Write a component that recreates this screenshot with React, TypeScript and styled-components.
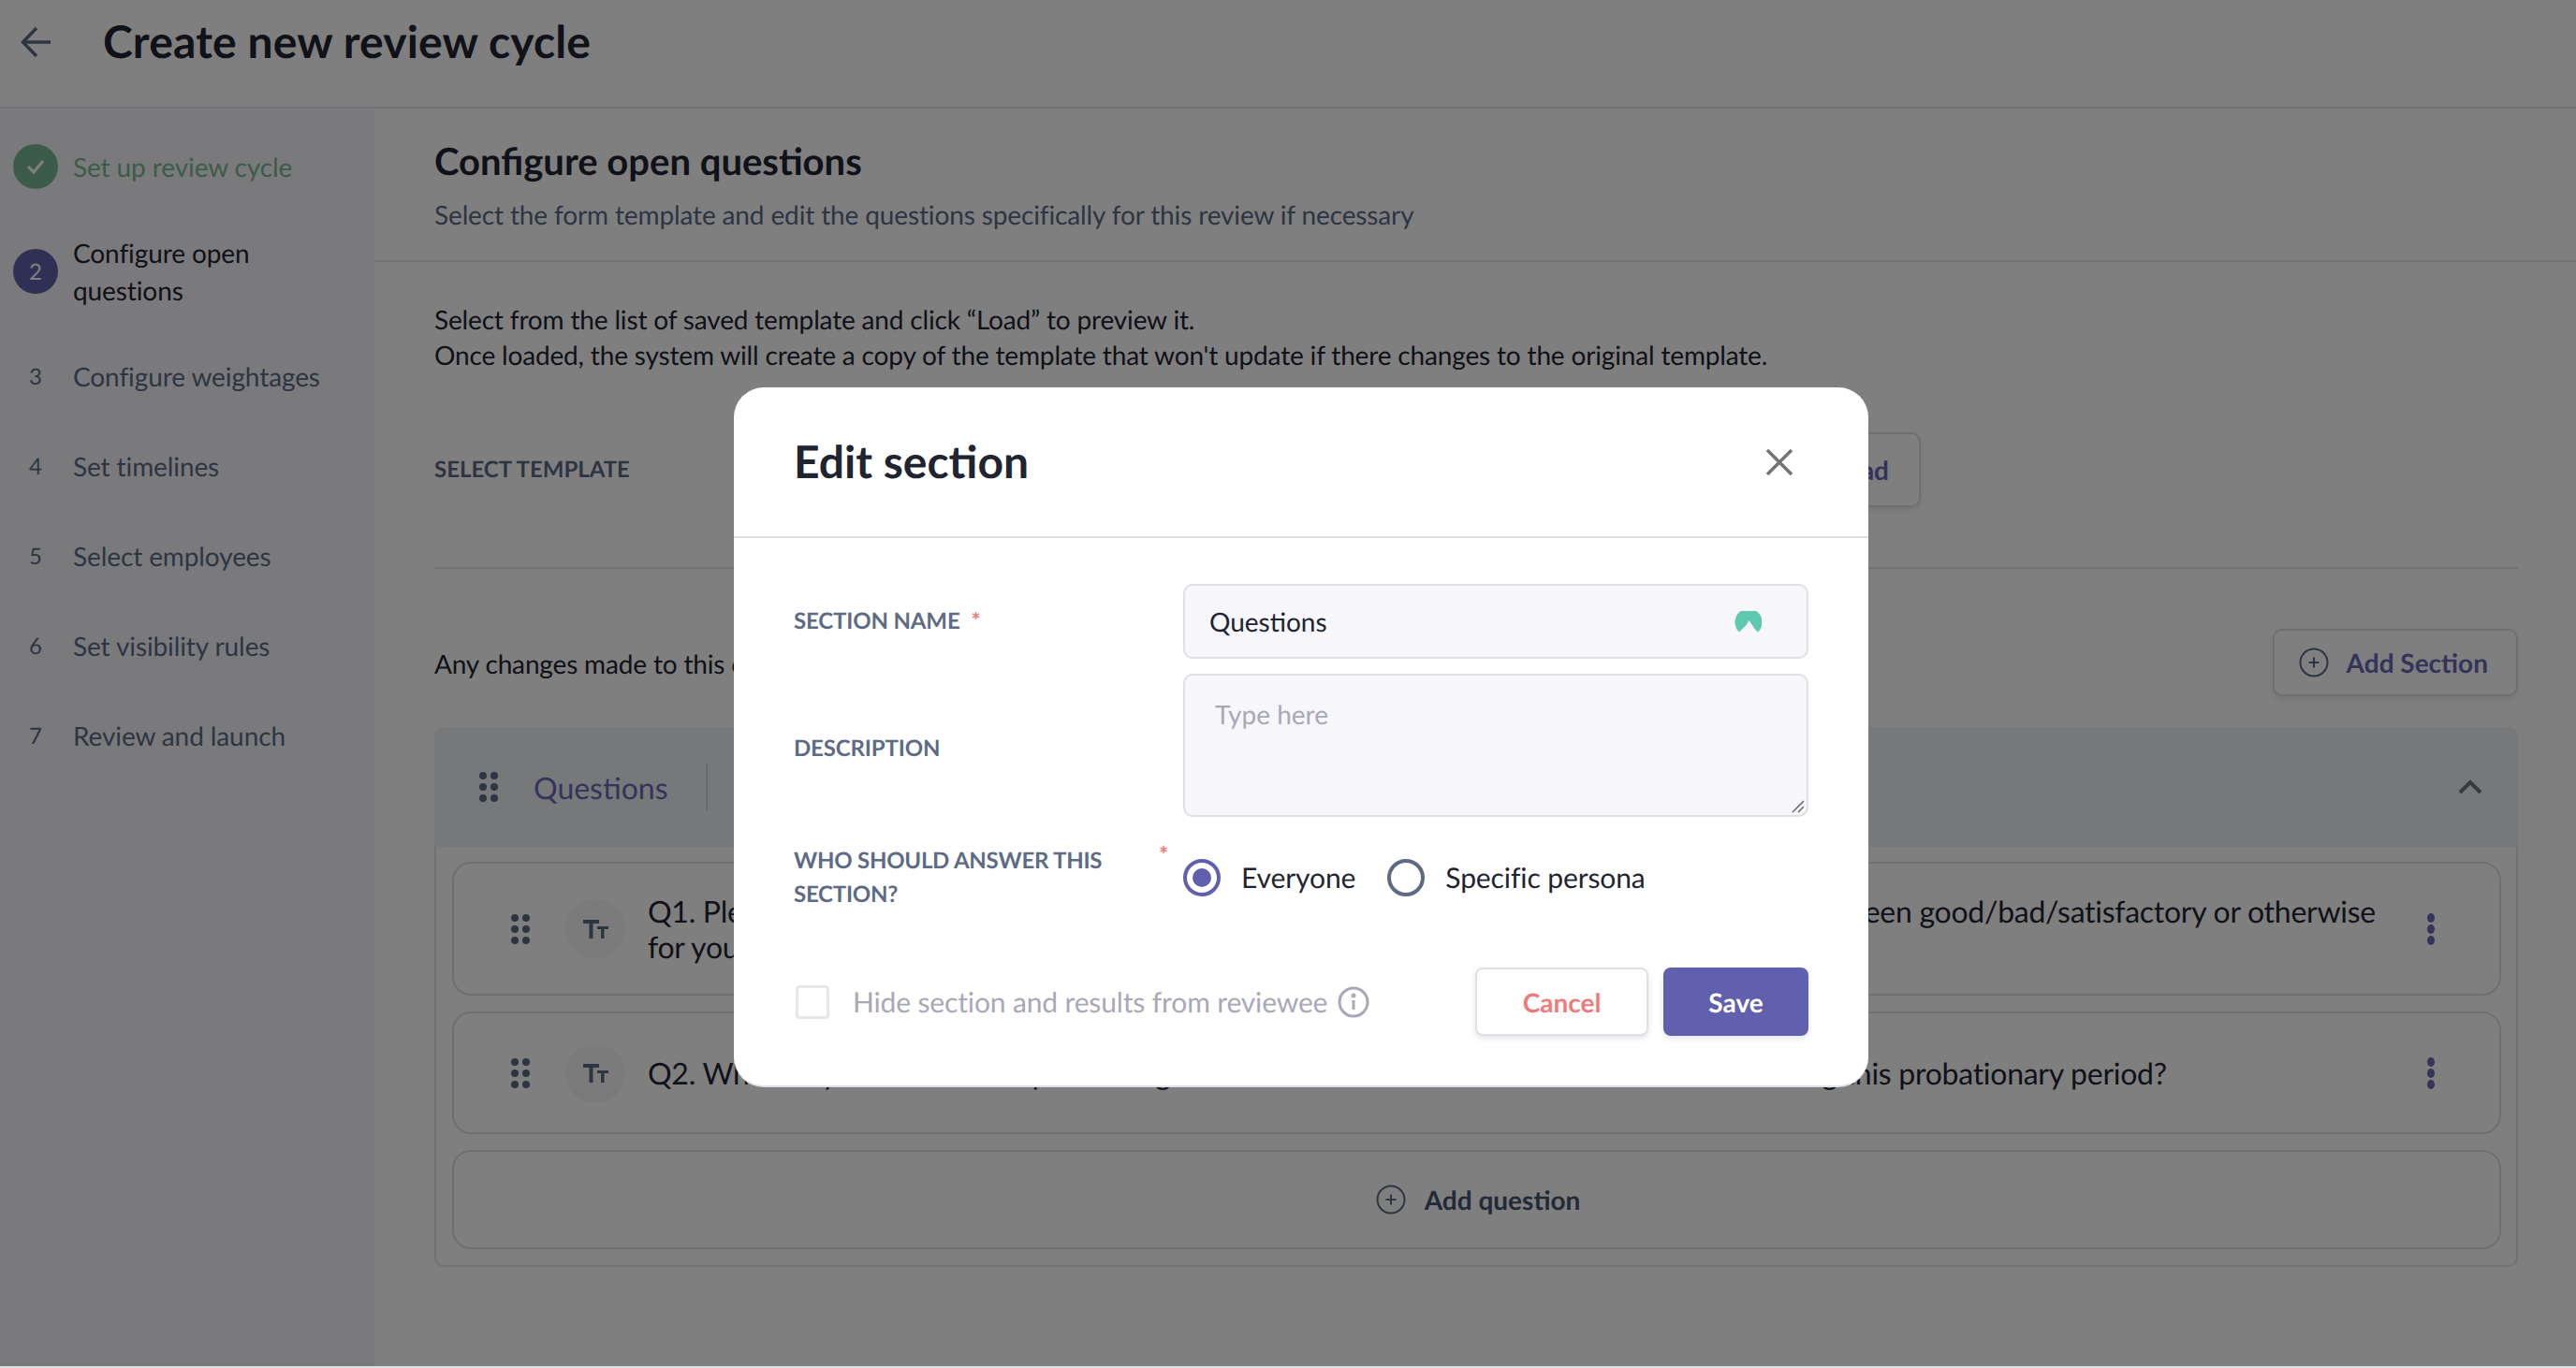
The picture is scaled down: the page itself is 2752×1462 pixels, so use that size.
import React from 'react';
import styled, { createGlobalStyle } from 'styled-components';

const Global = createGlobalStyle`
  html, body {
    margin: 0;
    padding: 0;
    background: #fff;
  }
  * {
    box-sizing: border-box;
  }
  #root {
    font-family: Lato, 'Liberation Sans', sans-serif;
    text-rendering: geometricPrecision;
  }
`;

const Page = styled.div`
  width: 2752px;
  height: 1462px;
  overflow: hidden;
  position: relative;
  display: flex;
  flex-direction: column;
  color: #1f2530;
  border-bottom: 2px solid #dcdfe6;
`;

const Header = styled.header`
  height: 116px;
  flex: none;
  display: flex;
  align-items: center;
  padding: 0 0 24px 22px;
  gap: 54px;
  border-bottom: 2px solid #e3e4ec;
`;

const Title = styled.h1`
  margin: 0;
  font-size: 48px;
  font-weight: 700;
  line-height: 60px;
  letter-spacing: 0.15px;
`;

const Body = styled.div`
  flex: 1;
  display: flex;
  min-height: 0;
`;

const Sidebar = styled.nav`
  width: 400px;
  flex: none;
  background: #f5f5f8;
  display: flex;
  flex-direction: column;
  padding: 38px 0 0 14px;
`;

const Step = styled.div`
  display: flex;
  align-items: center;
  gap: 16px;
  margin-bottom: 48px;
  min-height: 48px;
`;

const StepBadge = styled.span<{ $bg?: string }>`
  width: 48px;
  height: 48px;
  flex: none;
  border-radius: 50%;
  display: flex;
  align-items: center;
  justify-content: center;
  font-size: 24px;
  color: ${({ $bg }) => ($bg ? '#fff' : '#5d6b85')};
  background: ${({ $bg }) => $bg ?? 'transparent'};
`;

const StepText = styled.span<{ $color: string }>`
  font-size: 28px;
  line-height: 40px;
  letter-spacing: -0.1px;
  color: ${({ $color }) => $color};
`;

const Main = styled.main`
  flex: 1;
  min-width: 0;
  display: flex;
  flex-direction: column;
`;

const SectionHead = styled.div`
  height: 164px;
  padding: 32px 64px 0;
  border-bottom: 2px solid #e3e4ec;
`;

const SectionTitle = styled.h2`
  margin: 0;
  font-size: 40px;
  font-weight: 700;
  line-height: 48px;
`;

const SectionSub = styled.p`
  margin: 15px 0 0;
  font-size: 28px;
  line-height: 36px;
  letter-spacing: -0.13px;
  color: #5d6b85;
`;

const Content = styled.div`
  padding: 42px 62px 0 64px;
  display: flex;
  flex-direction: column;
`;

const Intro = styled.p`
  margin: 0;
  font-size: 28px;
  line-height: 38px;
  letter-spacing: -0.16px;
`;

const TemplateRow = styled.div`
  display: flex;
  align-items: flex-start;
  justify-content: space-between;
  height: 146px;
  margin-top: 64px;
  border-bottom: 2px solid #e3e4ec;
`;

const FieldLabel = styled.span`
  font-size: 24px;
  font-weight: 700;
  line-height: 36px;
  color: #5d6b85;
`;

const TemplateLabel = styled(FieldLabel)`
  margin-top: 22px;
`;

const OutlineButton = styled.button`
  font-family: inherit;
  font-size: 28px;
  font-weight: 700;
  color: #6a66b4;
  background: #fff;
  border: 2px solid #dcdfe6;
  border-radius: 10px;
  box-shadow: 0 3px 6px rgba(40, 40, 70, 0.1);
  display: flex;
  align-items: center;
  justify-content: flex-end;
  white-space: nowrap;
  text-rendering: inherit;
`;

const LoadButton = styled(OutlineButton)`
  width: 300px;
  height: 80px;
  padding: 0 32px;
  margin-right: 638px;
`;

const ChangesRow = styled.div`
  display: flex;
  align-items: center;
  justify-content: space-between;
  height: 72px;
  margin-top: 64px;
  font-size: 28px;
  letter-spacing: -0.16px;
`;

const ChangesText = styled.span`
  padding-top: 2px;
`;

const AddSection = styled(OutlineButton)`
  width: 262px;
  height: 72px;
  padding: 0 30px 0 26px;
  justify-content: space-between;
`;

const Accordion = styled.section`
  margin-top: 33px;
  height: 577px;
  border: 2px solid #e3e4ec;
  border-top: none;
  border-radius: 10px;
`;

const AccordionHead = styled.div`
  height: 128px;
  margin: 0 -2px;
  padding: 0 38px 0 48px;
  background: #eff0f3;
  border-radius: 10px 10px 0 0;
  display: flex;
  align-items: center;
`;

const AccordionName = styled.span`
  margin-left: 38px;
  font-size: 32px;
  color: #6a66b4;
  padding: 2px 40px 0 0;
  border-right: 2px solid #d5d8df;
  line-height: 48px;
`;

const Chevron = styled.svg`
  margin-left: auto;
`;

const Cards = styled.div`
  padding: 16px 16px 0 17px;
  display: flex;
  flex-direction: column;
  gap: 17px;
`;

const Card = styled.div<{ $h: number }>`
  height: ${({ $h }) => $h}px;
  border: 2px solid #dcdfe6;
  border-radius: 20px;
  display: flex;
  align-items: center;
  padding: 0 68px 0 61px;
`;

const TypeBadge = styled.span`
  width: 64px;
  height: 64px;
  flex: none;
  border-radius: 50%;
  margin: 0 24px 0 38px;
  background: #f6f6f7;
  display: flex;
  align-items: center;
  justify-content: center;
`;

const QuestionText = styled.p`
  flex: 1;
  margin: 0;
  font-size: 32px;
  line-height: 38px;
  letter-spacing: -0.27px;
`;

const AddCard = styled(Card)`
  justify-content: center;
  gap: 20px;
  font-size: 28px;
  font-weight: 700;
  color: #46556f;
  padding: 0 0 0 3px;
`;

const Overlay = styled.div`
  position: absolute;
  inset: 0;
  background: rgba(0, 0, 0, 0.5);
`;

const Modal = styled.div`
  position: absolute;
  left: 784px;
  top: 414px;
  width: 1212px;
  height: 748px;
  background: #fff;
  border-radius: 32px;
  border-bottom: 2px solid #dde0e6;
  display: flex;
  flex-direction: column;
`;

const ModalHead = styled.div`
  height: 161px;
  flex: none;
  border-bottom: 2px solid #dde0e6;
  padding: 0 80px 0 64px;
  display: flex;
  align-items: center;
  justify-content: space-between;
`;

const ModalTitle = styled.h3`
  margin: 0;
  font-size: 48px;
  font-weight: 700;
  line-height: 60px;
  color: #1f2530;
`;

const ModalBody = styled.div`
  padding: 49px 64px 0;
  display: grid;
  grid-template-columns: 416px 668px;
  row-gap: 16px;
`;

const FormLabel = styled(FieldLabel)`
  align-self: center;
  letter-spacing: -0.15px;
`;

const DescriptionLabel = styled(FormLabel)`
  padding-top: 6px;
`;

const Required = styled.span`
  color: #ee7a7a;
  margin-left: 12px;
`;

const InputBox = styled.div`
  height: 80px;
  border: 2px solid #dde0e6;
  border-radius: 10px;
  background: #f6f6fb;
  padding: 0 48px 0 26px;
  display: flex;
  align-items: center;
  justify-content: space-between;
  font-size: 28px;
  color: #1f2530;
`;

const TextareaBox = styled.div`
  height: 153px;
  position: relative;
  border: 2px solid #dde0e6;
  border-radius: 10px;
  background: #f6f6fb;
  padding: 21px 32px;
  font-size: 28px;
  line-height: 40px;
  color: #a8a8b8;
`;

const ResizeGrip = styled.svg`
  position: absolute;
  right: 2px;
  bottom: 2px;
`;

const AnswerLabel = styled(FieldLabel)`
  position: relative;
  margin-top: 13px;
  letter-spacing: -0.24px;
`;

const AnswerRequired = styled.span`
  position: absolute;
  left: 390px;
  top: -6px;
  color: #ee7a7a;
`;

const RadioRow = styled.div`
  display: flex;
  align-items: center;
  margin-top: 29px;
  height: 40px;
  font-size: 30px;
  letter-spacing: -0.1px;
`;

const Radio = styled.span<{ $checked?: boolean }>`
  width: 40px;
  height: 40px;
  border-radius: 50%;
  flex: none;
  margin-right: 22px;
  border: 4px solid ${({ $checked }) => ($checked ? '#6160ae' : '#5d6b85')};
  display: flex;
  align-items: center;
  justify-content: center;
  &::after {
    content: '';
    width: 20px;
    height: 20px;
    border-radius: 50%;
    background: ${({ $checked }) => ($checked ? '#6160ae' : 'transparent')};
  }
`;

const RadioName = styled.span`
  margin-right: 34px;
`;

const ModalFoot = styled.div`
  display: flex;
  align-items: center;
  padding: 0 64px 0 66px;
  margin-top: 60px;
`;

const Checkbox = styled.span`
  width: 36px;
  height: 36px;
  flex: none;
  border: 3px solid #e6e7ea;
  border-radius: 4px;
  margin-right: 25px;
`;

const HideText = styled.span`
  font-size: 30px;
  letter-spacing: -0.14px;
  color: #a8a8b8;
  margin-right: 11px;
`;

const CancelButton = styled.button`
  margin-left: auto;
  width: 185px;
  height: 73px;
  border: 2px solid #dfe0e8;
  border-radius: 8px;
  background: #fff;
  box-shadow: 0 3px 6px rgba(40, 40, 70, 0.12);
  color: #ee7a7a;
  font-family: inherit;
  font-size: 28px;
  font-weight: 700;
  text-rendering: inherit;
`;

const SaveButton = styled.button`
  margin-left: 16px;
  width: 155px;
  height: 73px;
  border: none;
  border-radius: 8px;
  background: #6160ae;
  box-shadow: 0 3px 6px rgba(40, 40, 70, 0.12);
  color: #fff;
  font-family: inherit;
  font-size: 28px;
  font-weight: 700;
  text-rendering: inherit;
`;

function Dots(): JSX.Element {
  return (
    <svg width="20" height="32" viewBox="0 0 20 32" fill="#5d6b85">
      {[4, 16, 28].flatMap((y) =>
        [4, 16].map((x) => <circle key={`${x}-${y}`} cx={x} cy={y} r="4" />)
      )}
    </svg>
  );
}

function TtIcon(): JSX.Element {
  return (
    <svg width="28" height="20" viewBox="0 0 28 20" fill="#5d6b85">
      <path d="M1 0h17v4h-6.500v16H7.500V4H1z" />
      <path d="M16 7h12v3h-4.500v10h-3.500V10H16z" />
    </svg>
  );
}

function Kebab(): JSX.Element {
  return (
    <svg width="10" height="34" viewBox="0 0 10 34" fill="#6a66b4">
      {[5, 17, 29].map((y) => (
        <ellipse key={y} cx="5" cy={y} rx="4" ry="5" />
      ))}
    </svg>
  );
}

function PlusCircle({ size, color }: { size: number; color: string }): JSX.Element {
  return (
    <svg width={size} height={size} viewBox="0 0 32 32" fill="none" stroke={color} strokeWidth="2">
      <circle cx="16" cy="16" r="14.500" />
      <path d="M16 10.500v11M10.500 16h11" />
    </svg>
  );
}

export default function App(): JSX.Element {
  return (
    <Page>
      <Global />
      <Header>
        <svg width="34" height="34" viewBox="0 0 34 34" fill="none" stroke="#5d6b85" strokeWidth="3.500">
          <path d="M32 17H3M17 2 2.500 17 17 32" />
        </svg>
        <Title>Create new review cycle</Title>
      </Header>
      <Body>
        <Sidebar>
          <Step>
            <StepBadge $bg="#7ab794">
              <svg width="22" height="18" viewBox="0 0 22 18" fill="none" stroke="#fff" strokeWidth="3">
                <path d="M3 9l6 6L19 3" />
              </svg>
            </StepBadge>
            <StepText $color="#7ab794">Set up review cycle</StepText>
          </Step>
          <Step>
            <StepBadge $bg="#6160ae">2</StepBadge>
            <StepText $color="#1f2530">
              Configure open
              <br />
              questions
            </StepText>
          </Step>
          {[
            ['3', 'Configure weightages'],
            ['4', 'Set timelines'],
            ['5', 'Select employees'],
            ['6', 'Set visibility rules'],
            ['7', 'Review and launch'],
          ].map(([n, label]) => (
            <Step key={n}>
              <StepBadge>{n}</StepBadge>
              <StepText $color="#5d6b85">{label}</StepText>
            </Step>
          ))}
        </Sidebar>
        <Main>
          <SectionHead>
            <SectionTitle>Configure open questions</SectionTitle>
            <SectionSub>
              Select the form template and edit the questions specifically for this review if necessary
            </SectionSub>
          </SectionHead>
          <Content>
            <Intro>
              Select from the list of saved template and click “Load” to preview it.
              <br />
              Once loaded, the system will create a copy of the template that won't update if there changes
              to the original template.
            </Intro>
            <TemplateRow>
              <TemplateLabel>SELECT TEMPLATE</TemplateLabel>
              <LoadButton>Load</LoadButton>
            </TemplateRow>
            <ChangesRow>
              <ChangesText>Any changes made to this copy will not affect the original template.</ChangesText>
              <AddSection>
                <PlusCircle size={32} color="#5d6b85" />
                Add Section
              </AddSection>
            </ChangesRow>
            <Accordion>
              <AccordionHead>
                <Dots />
                <AccordionName>Questions</AccordionName>
                <Chevron width="26" height="16" viewBox="0 0 26 16" fill="none" stroke="#6f7378" strokeWidth="4">
                  <path d="M2 14 13 3l11 11" />
                </Chevron>
              </AccordionHead>
              <Cards>
                <Card $h={143}>
                  <Dots />
                  <TypeBadge>
                    <TtIcon />
                  </TypeBadge>
                  <QuestionText>
                    Q1. Please share your thoughts on the overall performance of your employees and why it has been
                    good/bad/satisfactory or otherwise
                    <br />
                    for your team.
                  </QuestionText>
                  <Kebab />
                </Card>
                <Card $h={131}>
                  <Dots />
                  <TypeBadge>
                    <TtIcon />
                  </TypeBadge>
                  <QuestionText>
                    Q2. What do you think about pace and growth shown at work and the results thus far during this
                    probationary period?
                  </QuestionText>
                  <Kebab />
                </Card>
                <AddCard $h={106}>
                  <PlusCircle size={32} color="#5d6b85" />
                  Add question
                </AddCard>
              </Cards>
            </Accordion>
          </Content>
        </Main>
      </Body>
      <Overlay />
      <Modal>
        <ModalHead>
          <ModalTitle>Edit section</ModalTitle>
          <svg width="30" height="30" viewBox="0 0 30 30" fill="none" stroke="#737373" strokeWidth="3.500">
            <path d="M2 2l26 26M28 2 2 28" />
          </svg>
        </ModalHead>
        <ModalBody>
          <FormLabel>
            SECTION NAME<Required>*</Required>
          </FormLabel>
          <InputBox>
            Questions
            <svg width="29" height="23" viewBox="0 0 29 23">
              <path
                d="M5 22.500A14.500 14.500 0 1 1 25 22.500L21.500 19 19 15 15.500 10 12.500 15 9.500 18z"
                fill="#5dc9b0"
              />
            </svg>
          </InputBox>
          <DescriptionLabel>DESCRIPTION</DescriptionLabel>
          <TextareaBox>
            Type here
            <ResizeGrip width="14" height="14" viewBox="0 0 14 14" stroke="#666" strokeWidth="1.500">
              <path d="M1 13 13 1M7 13l6-6" />
            </ResizeGrip>
          </TextareaBox>
          <AnswerLabel>
            WHO SHOULD ANSWER THIS
            <br />
            SECTION?
            <AnswerRequired>*</AnswerRequired>
          </AnswerLabel>
          <RadioRow>
            <Radio $checked />
            <RadioName>Everyone</RadioName>
            <Radio />
            <span>Specific persona</span>
          </RadioRow>
        </ModalBody>
        <ModalFoot>
          <Checkbox />
          <HideText>Hide section and results from reviewee</HideText>
          <svg width="34" height="34" viewBox="0 0 34 34" fill="none" stroke="#a8a8b8" strokeWidth="3">
            <circle cx="17" cy="17" r="15" />
            <path d="M17 15v10" />
            <circle cx="17" cy="10" r="1" />
          </svg>
          <CancelButton>Cancel</CancelButton>
          <SaveButton>Save</SaveButton>
        </ModalFoot>
      </Modal>
    </Page>
  );
}
